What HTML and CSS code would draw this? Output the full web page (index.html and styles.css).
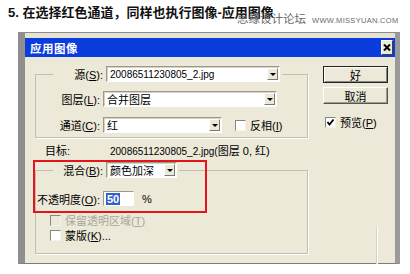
FILE: index.html
```html
<!DOCTYPE html>
<html lang="zh-CN">
<head>
   <meta charset="UTF-8">
   <title>应用图像</title>
   <link rel="stylesheet" href="styles.css">
</head>
<body>
<p class="step">5. 在选择红色通道，同样也执行图像-应用图像</p>
<div class="watermark"><span class="wm-cn">思缘设计论坛</span><span class="wm-en">WWW.MISSYUAN.COM</span></div>

<div class="dialog">
   <div class="titlebar">
      <span class="title">应用图像</span>
      <span class="close">
         <svg width="8" height="7" viewBox="0 0 8 7"><path d="M1 0.5 L7 6.5 M7 0.5 L1 6.5" stroke="#000" stroke-width="2"/></svg>
      </span>
   </div>

   <div class="dialog-body">
      <div class="main">
         <fieldset class="group">
            <legend>
               <span class="row">
                  <span class="lbl lbl-legend">源(<u>S</u>):</span>
                  <span class="select select-wide"><span class="val num">20086511230805_2.jpg</span><span class="arrow"></span></span>
               </span>
            </legend>
            <div class="row row-gap">
               <span class="lbl">图层(<u>L</u>):</span>
               <span class="select select-wide"><span class="val">合并图层</span><span class="arrow"></span></span>
            </div>
            <div class="row row-gap">
               <span class="lbl">通道(<u>C</u>):</span>
               <span class="select select-channel"><span class="val">红</span><span class="arrow"></span></span>
               <span class="check check-invert"></span>
               <span class="check-text">反相(<u>I</u>)</span>
            </div>
         </fieldset>

         <div class="target">
            <span class="target-lbl">目标:</span>
            <span class="target-val"><span class="num">20086511230805_2.jpg(</span>图层 0, 红)</span>
         </div>

         <fieldset class="group group-blend">
            <legend>
               <span class="row">
                  <span class="lbl lbl-legend">混合(<u>B</u>):</span>
                  <span class="select select-blend"><span class="val">颜色加深</span><span class="arrow"></span></span>
               </span>
            </legend>
            <div class="row row-opacity">
               <span class="lbl">不透明度(<u>O</u>):</span>
               <span class="input"><span class="sel">50</span></span>
               <span class="unit">%</span>
            </div>
            <div class="checkrow checkrow-first disabled">
               <span class="check"></span>
               <span class="check-text">保留透明区域(<u>T</u>)</span>
            </div>
            <div class="checkrow">
               <span class="check"></span>
               <span class="check-text">蒙版(<u>K</u>)...</span>
            </div>
         </fieldset>
      </div>

      <div class="side">
         <div class="btn btn-default">好</div>
         <div class="btn">取消</div>
         <div class="checkrow checkrow-preview">
            <span class="check">
               <svg width="9" height="9" viewBox="0 0 9 9"><path d="M1.5 4 L3.5 6.5 L7.5 1.5" fill="none" stroke="#000" stroke-width="1.8"/></svg>
            </span>
            <span class="check-text">预览(<u>P</u>)</span>
         </div>
         <div class="ghost-line"></div>
      </div>

      <div class="highlight"></div>
   </div>
</div>
</body>
</html>
```

FILE: styles.css
```css
* {
   box-sizing: border-box;
}

body {
   margin: 0;
   background: #fff;
   font-family: "Liberation Sans", "Noto Sans CJK SC", sans-serif;
   color: #000;
   position: relative;
}

u {
   text-decoration: underline;
}

.step {
   margin: 0;
   padding: 6px 0 0 8px;
   height: 20px;
   font-size: 13px;
   line-height: 14px;
   font-weight: bold;
   color: #111;
}

.watermark {
   position: absolute;
   left: 237px;
   top: 10px;
   display: flex;
   align-items: baseline;
   gap: 6px;
   color: #6a6a6a;
   white-space: nowrap;
}

.wm-cn {
   font-family: "Noto Sans CJK SC", sans-serif;
   font-size: 11.5px;
}

.wm-en {
   font-size: 7.5px;
   letter-spacing: 0.3px;
}

/* window frame */
.dialog {
   margin: 12px 0 0 18px;
   width: 382px;
   background: #e6e3d6;
   border-top: 1px solid #8c8c8c;
   border-left: 7px solid #8f8f8f;
   border-right: 5px solid #9a9a9a;
   border-bottom: 1px solid #7d7d7d;
   padding-top: 5px;
}

.titlebar {
   height: 19px;
   background: #0b3ddc;
   display: flex;
   align-items: center;
   justify-content: space-between;
   padding: 0 2px 0 5px;
}

.title {
   color: #fff;
   font-family: "Noto Sans CJK SC", sans-serif;
   font-weight: bold;
   font-size: 11.5px;
   letter-spacing: 0.5px;
}

.close {
   width: 12px;
   height: 15px;
   background: #ece9d8;
   border: 1px solid;
   border-color: #fff #404040 #404040 #fff;
   display: flex;
   align-items: center;
   justify-content: center;
}

.dialog-body {
   position: relative;
   height: 206px;
   background: #ece9d8;
   display: flex;
   padding: 9px 0 0 10px;
   font-size: 11px;
}

.num {
   font-size: 10px;
}

.main {
   width: 273px;
}

.side {
   width: 65px;
   margin-left: 15px;
   position: relative;
}

/* group boxes */
.group {
   margin: 0;
   padding: 0 0 4px 0;
   min-width: 0;
   border: 1px solid #c2bfb0;
   box-shadow: 1px 1px 0 #fff;
}

.group legend {
   margin-left: 17px;
   padding: 0 2px;
}

.row {
   display: flex;
   align-items: center;
   height: 16px;
}

.row-gap {
   margin-top: 9px;
}

.row-gap + .row-gap {
   margin-top: 10px;
}

.lbl {
   width: 67px;
   text-align: right;
   padding-right: 3px;
   white-space: nowrap;
}

.lbl-legend {
   width: 51px;
}

.select {
   height: 16px;
   background: #fff;
   border: 1px solid;
   border-color: #9c998c #fff #fff #9c998c;
   box-shadow: inset 1px 1px 0 #d6d3c6;
   display: flex;
   align-items: center;
   justify-content: space-between;
   padding: 0 1px 0 3px;
}

.select-wide {
   width: 174px;
}

.select-channel {
   width: 119px;
}

.select-blend {
   width: 71px;
}

.val {
   white-space: nowrap;
}

.arrow {
   width: 11px;
   height: 12px;
   background: #ece9d8;
   border: 1px solid;
   border-color: #fff #7a7a7a #7a7a7a #fff;
   position: relative;
}

.arrow::after {
   content: "";
   position: absolute;
   left: 2px;
   top: 4px;
   border-left: 3px solid transparent;
   border-right: 3px solid transparent;
   border-top: 3px solid #000;
}

.check {
   width: 11px;
   height: 11px;
   background: #fff;
   border: 1px solid;
   border-color: #8a877a #f4f2ea #f4f2ea #8a877a;
   display: flex;
   align-items: center;
   justify-content: center;
   flex: none;
}

.check-invert {
   margin-left: 13px;
}

.check-text {
   margin-left: 4px;
   white-space: nowrap;
}

.target {
   display: flex;
   align-items: baseline;
   margin: 6px 0 0 10px;
   line-height: 14px;
   height: 14px;
   white-space: nowrap;
}

.target-lbl {
   width: 65px;
}

.group-blend {
   margin-top: 4px;
   padding-bottom: 12px;
}

.row-opacity {
   margin-top: 13px;
   height: 15px;
}

.input {
   width: 31px;
   height: 15px;
   background: #fff;
   border: 1px solid;
   border-color: #9c998c #fff #fff #9c998c;
   padding: 0 0 0 2px;
   display: flex;
   align-items: center;
}

.sel {
   background: #3163c6;
   color: #fff;
   font-weight: bold;
   line-height: 12px;
   padding: 0 1px;
}

.unit {
   margin-left: 8px;
}

.checkrow {
   display: flex;
   align-items: center;
   height: 12px;
   margin-left: 14px;
   margin-top: 3px;
}

.checkrow-first {
   margin-top: 8px;
}

.disabled .check {
   background: #ece9d8;
}

.disabled .check-text {
   color: #a9a69a;
}

/* buttons */
.btn {
   height: 17px;
   font-size: 11px;
   display: flex;
   align-items: center;
   justify-content: center;
   background: #ece9d8;
   border: 1px solid;
   border-color: #fff #555 #555 #fff;
   box-shadow: inset -1px -1px 0 #a09d90;
   margin-bottom: 4px;
}

.btn-default {
   border-color: #222;
   box-shadow: inset 1px 1px 0 #fff, inset -1px -1px 0 #888;
}

.checkrow-preview {
   margin: 12px 0 0 2px;
}

/* faint edge left over in the capture */
.ghost-line {
   margin: 98px 0 0 53px;
   width: 2px;
   height: 38px;
   border-left: 1px solid #d6d3c6;
   border-right: 1px solid #fff;
}

.highlight {
   position: absolute;
   left: 8px;
   top: 103px;
   width: 174px;
   height: 53px;
   border: 2px solid #e3151a;
}
```
